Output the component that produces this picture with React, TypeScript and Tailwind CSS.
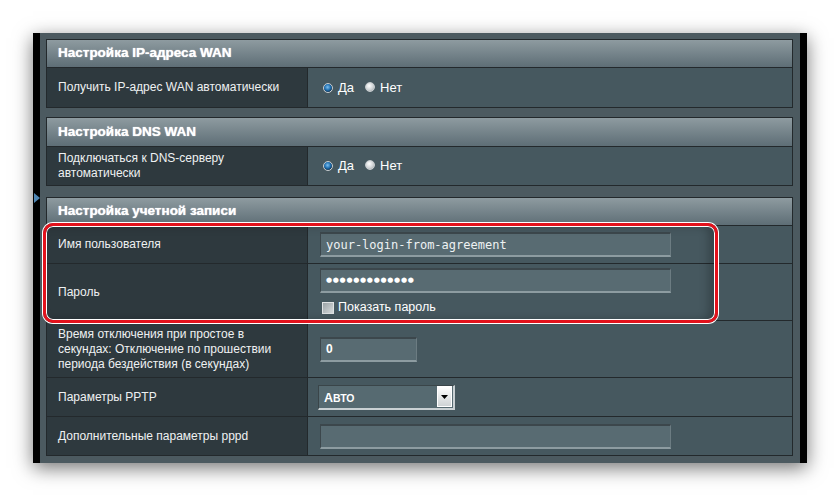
import React from "react";

const FONT = { fontFamily: '"Liberation Sans", Arial, sans-serif' };
const MONO = { fontFamily: '"DejaVu Sans Mono", "Liberation Mono", monospace' };

function Radio({ checked }: { checked?: boolean }) {
  return (
    <span
      className={
        "inline-block w-[10px] h-[10px] rounded-full border border-[#c8cdd0] " +
        (checked
          ? "bg-[radial-gradient(circle_at_45%_40%,#7fc0ee_0%,#1f6fb0_45%,#0d3050_75%,#e6eaec_76%)]"
          : "bg-[radial-gradient(circle_at_40%_35%,#ffffff_0%,#d0d4d6_55%,#9aa0a3_100%)]")
      }
    />
  );
}

function YesNo() {
  return (
    <div className="flex items-center text-[13px] text-white pl-[15px]">
      <Radio checked />
      <span className="ml-[5px]">Да</span>
      <span className="ml-[11px]">
        <Radio />
      </span>
      <span className="ml-[5px]">Нет</span>
    </div>
  );
}

function TextBox({ w, children }: { w: string; children?: React.ReactNode }) {
  return (
    <div
      className={
        w +
        " h-[25px] flex items-center pl-[5px] bg-[#586b72] border-t-2 border-l border-t-[#3c474c] border-l-[#3c474c] border-b-2 border-r border-b-[#8d9ca1] border-r-[#6c7c82] text-white"
      }
    >
      {children}
    </div>
  );
}

function Section({ title, h, children }: { title: string; h: string; children: React.ReactNode }) {
  return (
    <div className="border border-[#23292c]">
      <div
        className={
          h +
          " flex items-center pl-[11px] border-b border-[#23292c] bg-gradient-to-b from-[#8e9ba0] to-[#5e6e76] text-white font-bold text-[13.5px] [text-shadow:0_0_1px_#fff]"
        }
      >
        {title}
      </div>
      {children}
    </div>
  );
}

function Row({
  label,
  h,
  last,
  children,
}: {
  label: React.ReactNode;
  h: string;
  last?: boolean;
  children: React.ReactNode;
}) {
  return (
    <div className={"grid grid-cols-[261px_1fr] " + h + (last ? "" : " border-b border-[#23292c]")}>
      <div className="bg-[#2e393e] border-r border-[#23292c] flex items-center pl-[11px] text-[12px] leading-[15px] text-[#eef1f2]">
        {label}
      </div>
      <div className="bg-[#46585f] flex flex-col justify-center">{children}</div>
    </div>
  );
}

export default function App() {
  return (
    <div className="w-[840px] h-[497px] bg-white pt-[33px] pl-[33px]" style={FONT}>
      <div className="relative w-[774px] h-[430px] flex shadow-[0_5px_18px_rgba(0,0,0,0.55)]">
        <div className="w-[7px] bg-black" />
        <div className="flex-1 bg-[#4c5a60] pt-[6px] pl-[6px] pr-[7px] flex flex-col">
          <Section title="Настройка IP-адреса WAN" h="h-[28px]">
            <Row label="Получить IP-адрес WAN автоматически" h="h-[39px]" last>
              <YesNo />
            </Row>
          </Section>
          <div className="h-[9px]" />
          <Section title="Настройка DNS WAN" h="h-[29px]">
            <Row
              label={
                <span>
                  Подключаться к DNS-серверу
                  <br />
                  автоматически
                </span>
              }
              h="h-[38px]"
              last
            >
              <YesNo />
            </Row>
          </Section>
          <div className="h-[11px]" />
          <div className="relative">
            <Section title="Настройка учетной записи" h="h-[28px]">
              <Row label="Имя пользователя" h="h-[38px]">
                <div className="pl-[12px]">
                  <TextBox w="w-[351px]">
                    <span className="text-[12px] text-[#eef2f3]" style={MONO}>
                      your-login-from-agreement
                    </span>
                  </TextBox>
                </div>
              </Row>
              <Row label="Пароль" h="h-[57px]">
                <div className="pl-[12px] pt-[1px]">
                  <TextBox w="w-[351px]">
                    <span className="text-[7px] tracking-[0.7px] text-white leading-none" style={{ fontFamily: '"DejaVu Sans", sans-serif' }}>
                      ●●●●●●●●●●●●●
                    </span>
                  </TextBox>
                  <div className="flex items-center mt-[5px] text-[12.5px] text-white">
                    <span className="ml-[2px] w-[12px] h-[12px] border border-[#e0e3e4] bg-gradient-to-br from-[#9aa2a5] to-[#d8dcdd]" />
                    <span className="ml-[4px]">Показать пароль</span>
                  </div>
                </div>
              </Row>
              <Row
                label={
                  <span>
                    Время отключения при простое в
                    <br />
                    секундах: Отключение по прошествии
                    <br />
                    периода бездействия (в секундах)
                  </span>
                }
                h="h-[57px]"
              >
                <div className="pl-[12px]">
                  <TextBox w="w-[97px]">
                    <span className="text-[12px] font-bold">0</span>
                  </TextBox>
                </div>
              </Row>
              <Row label="Параметры PPTP" h="h-[39px]">
                <div className="pl-[10px]">
                  <div className="w-[137px] h-[25px] flex items-center bg-[#566a71] border-t border-l border-t-[#3a4549] border-l-[#3a4549] border-b-2 border-r-2 border-b-[#c9d0d3] border-r-[#c9d0d3]">
                    <span className="flex-1 pl-[5px] font-bold text-white">
                      <span className="text-[12.5px]">А</span>
                      <span className="text-[10.5px]">ВТО</span>
                    </span>
                    <span className="w-[15px] h-[21px] mr-[1px] flex items-center justify-center border border-white bg-gradient-to-b from-[#ffffff] to-[#cfd3d5]">
                      <svg width="7" height="4" viewBox="0 0 7 4">
                        <path d="M0 0h7L3.5 4z" fill="#000" />
                      </svg>
                    </span>
                  </div>
                </div>
              </Row>
              <Row label="Дополнительные параметры pppd" h="h-[38px]" last>
                <div className="pl-[12px]">
                  <TextBox w="w-[351px]" />
                </div>
              </Row>
            </Section>
            <div className="absolute left-[-3px] top-[26px] w-[675px] h-[100px] rounded-[10px] border-[3px] border-[#e3121c] shadow-[0_0_0_1px_#fff,inset_0_0_0_1px_#fff,inset_-6px_0_10px_rgba(0,0,0,0.25)]" />
          </div>
        </div>
        <div className="w-[7px] bg-black" />
        <svg className="absolute left-[1px] top-[160px]" width="6" height="10" viewBox="0 0 6 10">
          <path d="M0 0L6 5L0 10z" fill="#4f86b3" />
        </svg>
      </div>
    </div>
  );
}
